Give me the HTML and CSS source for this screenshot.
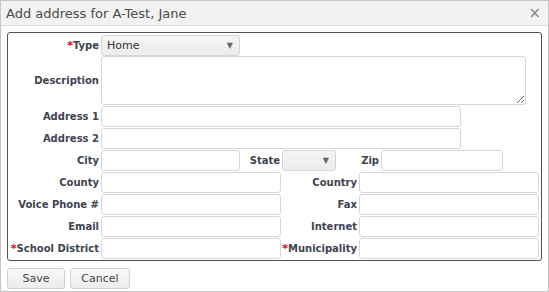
FILE: index.html
```html
<!DOCTYPE html>
<html lang="en">
<head>
    <meta charset="UTF-8">
    <title>Add address</title>
    <link rel="stylesheet" href="styles.css">
</head>
<body>
    <div class="dialog">
        <div class="titlebar">
            <span class="title">Add address for A-Test, Jane</span>
            <span class="close">&times;</span>
        </div>
        <div class="content">
            <div class="form">
                <div class="row">
                    <label class="lbl"><span class="req">*</span>Type</label>
                    <div class="select w-type"><span>Home</span><span class="arrow">&#9660;</span></div>
                </div>
                <div class="row row-desc">
                    <label class="lbl">Description</label>
                    <textarea class="field w-desc"></textarea>
                </div>
                <div class="row">
                    <label class="lbl">Address 1</label>
                    <input class="field w-addr" type="text">
                </div>
                <div class="row">
                    <label class="lbl">Address 2</label>
                    <input class="field w-addr" type="text">
                </div>
                <div class="row">
                    <label class="lbl">City</label>
                    <input class="field w-city" type="text">
                    <label class="lbl lbl-state">State</label>
                    <div class="select w-state"><span></span><span class="arrow">&#9660;</span></div>
                    <label class="lbl lbl-zip">Zip</label>
                    <input class="field w-zip" type="text">
                </div>
                <div class="row">
                    <label class="lbl">County</label>
                    <input class="field w-half" type="text">
                    <label class="lbl lbl-right">Country</label>
                    <input class="field w-half" type="text">
                </div>
                <div class="row">
                    <label class="lbl">Voice Phone #</label>
                    <input class="field w-half" type="text">
                    <label class="lbl lbl-right">Fax</label>
                    <input class="field w-half" type="text">
                </div>
                <div class="row">
                    <label class="lbl">Email</label>
                    <input class="field w-half" type="text">
                    <label class="lbl lbl-right">Internet</label>
                    <input class="field w-half" type="text">
                </div>
                <div class="row">
                    <label class="lbl"><span class="req">*</span>School District</label>
                    <input class="field w-half" type="text">
                    <label class="lbl lbl-right"><span class="req">*</span>Municipality</label>
                    <input class="field w-half" type="text">
                </div>
            </div>
            <div class="buttons">
                <button class="btn btn-save">Save</button>
                <button class="btn btn-cancel">Cancel</button>
            </div>
        </div>
    </div>
</body>
</html>
```

FILE: styles.css
```css
body {
    margin: 0;
    padding: 0;
    background: #fff;
    font-family: "DejaVu Sans", Verdana, sans-serif;
}
.dialog {
    width: 547px;
    height: 290px;
    border: 1px solid #c5c5c5;
    background: #fff;
}
.titlebar {
    height: 24px;
    background: #f2f2f2;
    border-bottom: 1px solid #dcdcdc;
    display: flex;
    align-items: center;
    justify-content: space-between;
    padding: 0 7px 0 5px;
}
.title {
    font-size: 13px;
    color: #4a4a4a;
}
.close {
    font-size: 15px;
    color: #888;
}
.content {
    padding: 6px 5px 0 6px;
}
.form {
    border: 1px solid #4d535c;
    border-radius: 3px;
    padding: 1px 0 1px 0;
    width: 533px;
}
.row {
    display: flex;
    align-items: center;
    height: 22px;
}
.row-desc {
    height: 49px;
}
.lbl {
    width: 91px;
    padding-right: 2px;
    text-align: right;
    font-size: 10px;
    font-weight: bold;
    color: #3d4350;
    white-space: nowrap;
}
.req {
    color: #e00000;
    font-size: 11px;
}
.lbl-state {
    width: 40px;
}
.lbl-zip {
    width: 43px;
}
.lbl-right {
    width: 76px;
}
.field {
    box-sizing: border-box;
    height: 21px;
    border: 1px solid #d6d6d6;
    border-radius: 3px;
    background: #fff;
    margin: 0;
    padding: 0 4px;
    font-family: inherit;
}
textarea.field {
    height: 49px;
    resize: both;
}
.select {
    box-sizing: border-box;
    height: 21px;
    border: 1px solid #d6d6d6;
    border-radius: 3px;
    background: linear-gradient(#f4f4f4, #ececec);
    display: flex;
    align-items: center;
    justify-content: space-between;
    padding: 0 6px 0 5px;
    font-size: 11px;
    color: #333;
}
.arrow {
    font-size: 8px;
    color: #666;
}
.w-type { width: 139px; }
.w-desc { width: 425px; }
.w-addr { width: 360px; }
.w-city { width: 139px; }
.w-state { width: 54px; }
.w-zip { width: 122px; }
.w-half { width: 180px; }
.buttons {
    display: flex;
    gap: 5px;
    padding-top: 7px;
}
.btn {
    box-sizing: border-box;
    height: 21px;
    border: 1px solid #d0d0d0;
    border-radius: 3px;
    background: linear-gradient(#f8f8f8, #ececec);
    font-family: inherit;
    font-size: 11px;
    color: #444;
    padding: 0;
}
.btn-save { width: 58px; }
.btn-cancel { width: 60px; }
```
